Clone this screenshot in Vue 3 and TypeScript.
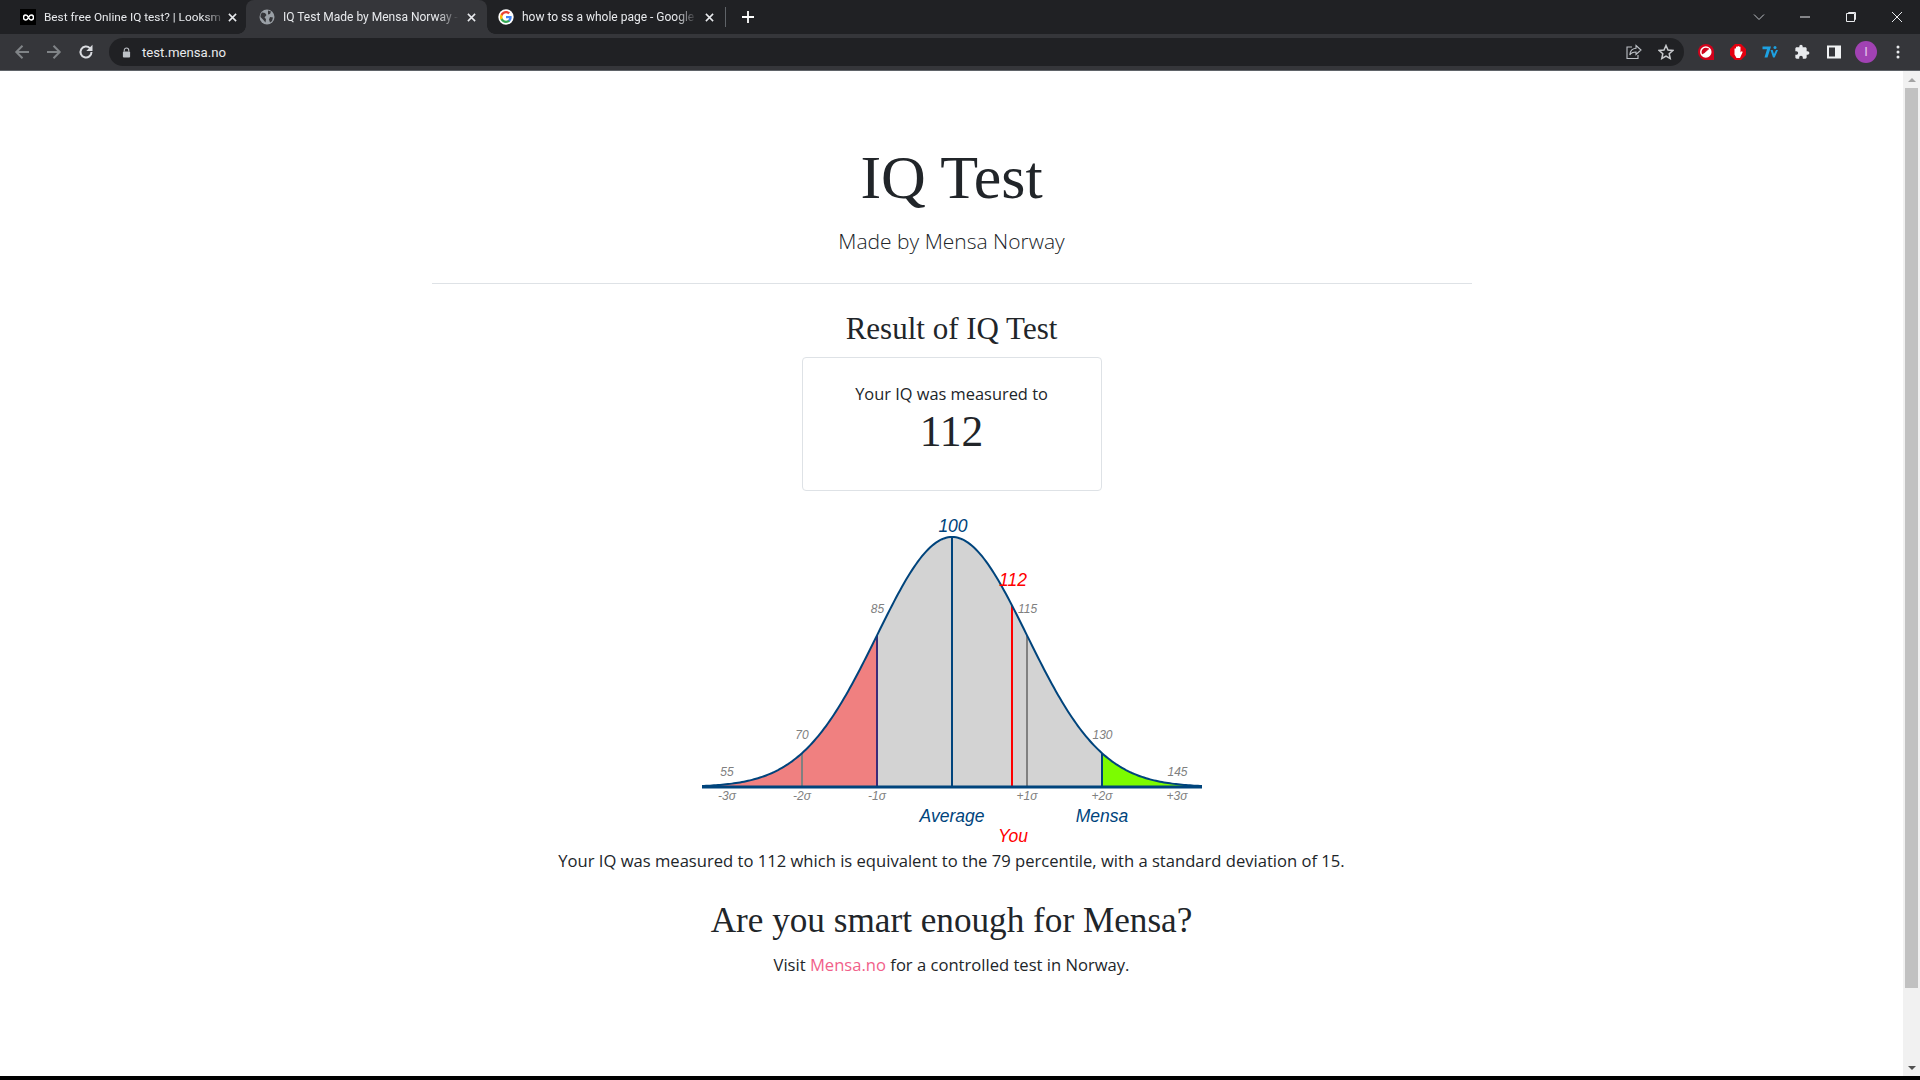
<script setup lang="ts">
const cx = 952
const base = 786
const yAt = (x: number) => base - 250 * Math.exp(-((x - cx) ** 2) / (2 * 75 * 75))
const curve = (a: number, b: number) => {
  const pts: string[] = []
  for (let x = a; x <= b; x += 2) pts.push(`${x} ${yAt(x).toFixed(2)}`)
  return pts.join(' L ')
}
const area = (a: number, b: number) => `M ${a} ${base} L ${curve(a, b)} L ${b} ${base} Z`
const line = `M ${curve(702, 1202)}`
const vlines = [
  { x: 802, c: '#808080' },
  { x: 877, c: '#3b2a78' },
  { x: 952, c: '#00447c' },
  { x: 1012, c: '#ff0000' },
  { x: 1027, c: '#808080' },
  { x: 1102, c: '#00447c' },
].map((v) => ({ ...v, y: yAt(v.x) }))
const small = [
  { t: '55', x: 727, y: 775 }, { t: '70', x: 802, y: 738 }, { t: '85', x: 877.5, y: 612 },
  { t: '115', x: 1027.5, y: 612 }, { t: '130', x: 1102.5, y: 738 }, { t: '145', x: 1177.5, y: 775 },
  { t: '-3σ', x: 727, y: 799 }, { t: '-2σ', x: 802, y: 799 }, { t: '-1σ', x: 877, y: 799 },
  { t: '+1σ', x: 1027, y: 799 }, { t: '+2σ', x: 1102, y: 799 }, { t: '+3σ', x: 1177, y: 799 },
]
const tabs = [
  { title: 'Best free Online IQ test? | Looksm', cls: 'tab t1', icon: 'inf' },
  { title: 'IQ Test Made by Mensa Norway -', cls: 'tab t2 active', icon: 'globe' },
  { title: 'how to ss a whole page - Google', cls: 'tab t3', icon: 'g' },
]
</script>

<template>
  <div class="page">
    <header class="chrome">
      <div class="tabstrip">
        <div v-for="tab in tabs" :key="tab.title" :class="tab.cls">
          <span v-if="tab.icon === 'inf'" class="fav-inf">
            <svg width="11" height="7" viewBox="0 0 12 8"><path d="M6 4C5 2 4 1.2 3 1.2A2.8 2.8 0 0 0 3 6.800C4 6.800 5 6 6 4C7 2 8 1.200 9 1.200A2.800 2.800 0 0 1 9 6.800C8 6.800 7 6 6 4Z" fill="none" stroke="#fff" stroke-width="1.800"/></svg>
          </span>
          <svg v-else-if="tab.icon === 'globe'" class="fav" viewBox="0 0 16 16">
            <circle cx="8" cy="8" r="7.500" fill="#9aa0a6"/>
            <path d="M3 3.500l3 .5 1.500 2-2 2.500 1.500 1.500-.5 3.500-2.500-3-2.500-2.500.2-2.500zM9 1.500l3 1-1 2.500-2 .5zM11 8l3 .5-1 3.500-2 1.500-1-3z" fill="#35363a"/>
          </svg>
          <svg v-else class="fav" viewBox="0 0 48 48">
            <path fill="#fff" d="M24 1a23 23 0 1 0 0 46 23 23 0 0 0 0-46z"/>
            <path fill="#4285f4" d="M41 24.500c0-1.200-.1-2.400-.3-3.500H24v6.800h9.700c-.4 2.200-1.700 4.100-3.600 5.400v4.400h5.800c3.400-3.100 5.100-7.700 5.100-12.700z"/>
            <path fill="#34a853" d="M24 42c4.800 0 8.900-1.600 11.900-4.300l-5.800-4.400c-1.600 1.100-3.700 1.700-6.100 1.700-4.700 0-8.700-3.100-10.100-7.400H7.900v4.600C10.900 38 17 42 24 42z"/>
            <path fill="#fbbc05" d="M13.900 27.600c-.8-2.200-.8-4.900 0-7.200v-4.600h-6c-2.500 5-2.500 11.400 0 16.400z"/>
            <path fill="#ea4335" d="M24 13c2.700 0 5 .9 6.900 2.700l5.100-5.100C32.900 7.700 28.800 6 24 6 17 6 10.900 10 7.900 15.800l6 4.600C15.300 16.100 19.300 13 24 13z"/>
          </svg>
          <span class="tab-title">{{ tab.title }}</span>
          <svg class="tab-x" viewBox="0 0 10 10"><path d="M1 1l8 8M9 1l-8 8" stroke="#e8eaed" stroke-width="1.700"/></svg>
        </div>
        <span class="sep"></span>
        <svg class="plus" viewBox="0 0 12 12"><path d="M6 0v12M0 6h12" stroke="#fff" stroke-width="1.800"/></svg>
        <span class="spacer"></span>
        <svg class="win chev" viewBox="0 0 12 12"><path d="M1 3.500l5 5 5-5" fill="none" stroke="#bdc1c6" stroke-width="1"/></svg>
        <svg class="win" viewBox="0 0 12 12"><path d="M1 6h10" stroke="#e8eaed" stroke-width="1"/></svg>
        <svg class="win" viewBox="0 0 12 12"><path d="M3.500 2.500V1.500h7v7h-1M1.500 2.500h8v8h-8z" fill="none" stroke="#e8eaed" stroke-width="1"/></svg>
        <svg class="win last" viewBox="0 0 12 12"><path d="M1 1l10 10M11 1L1 11" stroke="#e8eaed" stroke-width="1"/></svg>
      </div>
      <div class="toolbar">
        <svg class="nav" viewBox="0 0 16 16"><path d="M15 8H2.500M8.500 1.800L2.300 8l6.200 6.200" fill="none" stroke="#808487" stroke-width="2"/></svg>
        <svg class="nav" viewBox="0 0 16 16"><path d="M1 8h12.500M7.500 1.800L13.700 8l-6.200 6.200" fill="none" stroke="#808487" stroke-width="2"/></svg>
        <svg class="nav" viewBox="0 0 16 16"><path d="M13.500 8a5.500 5.500 0 1 1-1.600-3.900" fill="none" stroke="#dadce0" stroke-width="2"/><path d="M14.500 .8V7H8.300z" fill="#dadce0"/></svg>
        <div class="omni">
          <svg class="lock" viewBox="0 0 10 12"><path d="M2.500 5V3.500a2.500 2.500 0 0 1 5 0V5" fill="none" stroke="#bdc1c6" stroke-width="1.200"/><rect x="1" y="5" width="8" height="6.500" rx="1" fill="#bdc1c6"/></svg>
          <span class="url">test.mensa.no</span>
          <span class="spacer"></span>
          <svg class="omni-ic share" viewBox="0 0 16 16"><path d="M10 1.500l5 4.500-5 4.500V8C7 8 5 9 3.800 11 4 7.500 6 4.500 10 4.200z" fill="none" stroke="#bdc1c6" stroke-width="1.100"/><path d="M6 3H1v11.500h11V11" fill="none" stroke="#bdc1c6" stroke-width="1.100"/></svg>
          <svg class="omni-ic star" viewBox="0 0 16 16"><path d="M8 1.500l2 4.500 4.800.5-3.600 3.200 1 4.800L8 12l-4.200 2.500 1-4.800L1.200 6.500 6 6z" fill="none" stroke="#c8cacd" stroke-width="1.500"/></svg>
        </div>
        <div class="exts">
          <svg class="ext" viewBox="0 0 16 16"><path d="M8 0a8 8 0 1 0 0 16h8V8a8 8 0 0 0-8-8z" fill="#d0021b"/><circle cx="7.800" cy="8" r="5" fill="none" stroke="#fff" stroke-width="1.500"/><path d="M11 4.500L3.800 10.800A5 5 0 0 0 11.500 11.500 5 5 0 0 0 11 4.500z" fill="#fff"/><path d="M11 4.500L5.500 9.500" stroke="#d0021b" stroke-width="1"/></svg>
          <svg class="ext" viewBox="0 0 16 16"><path d="M5 0h6l5 5v6l-5 5H5l-5-5V5z" fill="#e3000f"/><path d="M4.500 8.500V5a.8.8 0 0 1 1.500-.2V3a.8.8 0 0 1 1.500 0v-.6a.8.8 0 0 1 1.500 0V3a.8.8 0 0 1 1.500.2v5.300l.8-1a.8.8 0 0 1 1.200 1L10 14H6.500L4.500 10.500z" fill="#fff"/></svg>
          <svg class="ext" viewBox="0 0 16 16"><path d="M.500 2.500h8.500L5.500 13.500H2.500L5 5.300H.500z" fill="#1da1e2"/><path d="M8.500 6h2.200L12 10l2-4h2l-3.300 7.500h-1.700z" fill="#1da1e2"/><circle cx="13" cy="3.500" r="1.500" fill="#1da1e2"/></svg>
          <svg class="ext" viewBox="0 0 24 24"><path d="M20.500 11H19V7c0-1.100-.9-2-2-2h-4V3.500C13 2.120 11.880 1 10.500 1S8 2.120 8 3.500V5H4c-1.100 0-1.990.900-1.990 2v3.800H3.500c1.490 0 2.700 1.210 2.700 2.700s-1.210 2.700-2.700 2.700H2V20c0 1.100.900 2 2 2h3.800v-1.500c0-1.490 1.210-2.700 2.700-2.700 1.490 0 2.700 1.210 2.700 2.700V22H17c1.100 0 2-.900 2-2v-4h1.500c1.380 0 2.500-1.120 2.500-2.500S21.880 11 20.500 11z" fill="#e8eaed"/></svg>
          <svg class="ext" viewBox="0 0 16 16"><rect x="1" y="1.500" width="14" height="13" fill="#f1f3f4"/><rect x="3" y="3.500" width="6" height="9" fill="#35363a"/></svg>
          <span class="avatar">I</span>
          <svg class="ext" viewBox="0 0 16 16"><circle cx="8" cy="3" r="1.500" fill="#e8eaed"/><circle cx="8" cy="8" r="1.500" fill="#e8eaed"/><circle cx="8" cy="13" r="1.500" fill="#e8eaed"/></svg>
        </div>
      </div>
    </header>

    <div class="view">
      <main class="content">
        <div class="container">
          <header class="head">
            <h1>IQ Test</h1>
            <p class="lead">Made by Mensa Norway</p>
          </header>
          <hr />
          <h3>Result of IQ Test</h3>
          <section class="card">
            <p class="card-label">Your IQ was measured to</p>
            <p class="card-value">112</p>
          </section>
          <svg class="chart" width="500" height="340" viewBox="702 510 500 340">
            <path :d="area(702, 878)" fill="#f08080" />
            <path :d="area(876, 1102)" fill="#d3d3d3" />
            <path :d="area(1102, 1202)" fill="#7cfc00" />
            <line v-for="v in vlines" :key="v.x" :x1="v.x" :x2="v.x" :y1="v.y" :y2="base" :stroke="v.c" stroke-width="2" />
            <path :d="line" fill="none" stroke="#00447c" stroke-width="2" />
            <line x1="702" x2="1202" :y1="base" :y2="base" stroke="#00447c" stroke-width="3" />
            <text v-for="s in small" :key="s.t" :x="s.x" :y="s.y" class="t-small">{{ s.t }}</text>
            <text x="953" y="531" class="t-big blue">100</text>
            <text x="1013" y="585" class="t-big red">112</text>
            <text x="952" y="821" class="t-big blue">Average</text>
            <text x="1102" y="821" class="t-big blue">Mensa</text>
            <text x="1013" y="841" class="t-big red">You</text>
          </svg>
          <p class="desc">Your IQ was measured to 112 which is equivalent to the 79 percentile, with a standard deviation of 15.</p>
          <h2>Are you smart enough for Mensa?</h2>
          <p class="desc visit">Visit <a href="#">Mensa.no</a> for a controlled test in Norway.</p>
        </div>
      </main>
      <aside class="scrollbar">
        <span class="arrow up"></span>
        <span class="thumb"></span>
        <span class="arrow down"></span>
      </aside>
    </div>
    <div class="bottom"></div>
  </div>
</template>

<style scoped>
.page { width: 1920px; height: 1080px; display: flex; flex-direction: column; overflow: hidden; background: #fff; color: #212529; font-family: "Open Sans", sans-serif; }
.chrome { flex: none; height: 71px; background: #35363a; border-bottom: 1px solid #5f6368; box-sizing: border-box; }
.tabstrip { height: 34px; background: #202124; display: flex; align-items: center; padding-left: 16px; }
.tab { height: 34px; display: flex; align-items: center; gap: 8px; box-sizing: border-box; color: #e8eaed; font: 12px/34px "Roboto", sans-serif; flex: none; }
.t1 { width: 230px; padding: 0 8px 0 4px; font-size: 11.800px; }
.t1 .tab-title { margin-right: -6px; }
.t2 { width: 241px; padding: 0 10px 0 13px; }
.t3 { width: 238px; padding: 0 10px 0 11px; }
.tab.active { background: #35363a; border-radius: 8px 8px 0 0; position: relative; }
.tab.active::before, .tab.active::after { content: ""; position: absolute; bottom: 0; width: 8px; height: 8px; }
.tab.active::before { left: -8px; background: radial-gradient(circle at 0 0, transparent 7.500px, #35363a 8px); }
.tab.active::after { right: -8px; background: radial-gradient(circle at 100% 0, transparent 7.500px, #35363a 8px); }
.tab-title { flex: 1; min-width: 0; overflow: hidden; white-space: nowrap; -webkit-mask-image: linear-gradient(90deg, #000 88%, transparent); mask-image: linear-gradient(90deg, #000 88%, transparent); }
.fav { width: 16px; height: 16px; flex: none; }
.fav-inf { width: 16px; height: 16px; background: #000; display: flex; align-items: center; justify-content: center; flex: none; }
.tab-x { width: 9px; height: 9px; flex: none; margin-right: 1px; }
.sep { width: 1px; height: 20px; background: #5f6368; flex: none; }
.plus { width: 12px; height: 12px; margin-left: 16px; flex: none; }
.spacer { flex: 1; }
.win { width: 12px; height: 12px; margin-left: 34px; flex: none; }
.chev { margin-left: 0; }
.win.last { margin-right: 17px; }
.toolbar { height: 36px; display: flex; align-items: center; padding-left: 14px; gap: 16px; }
.nav { width: 16px; height: 16px; flex: none; }
.omni { width: 1575px; height: 28px; margin-left: -1px; background: #202124; border-radius: 14px; display: flex; align-items: center; padding: 0 10px 0 13px; box-sizing: border-box; flex: none; }
.lock { width: 9px; height: 11px; flex: none; }
.url { margin-left: 11px; font: 13.200px "Roboto", sans-serif; color: #e8eaed; }
.omni-ic { width: 16px; height: 16px; flex: none; }
.star { margin-left: 16px; }
.exts { display: flex; align-items: center; gap: 16px; margin-left: -2px; }
.ext { width: 16px; height: 16px; flex: none; }
.avatar { width: 22px; height: 22px; margin: 0 -3px; border-radius: 50%; background: #a142b3; color: #e6c4ec; font: 13px/22px "Roboto", sans-serif; text-align: center; flex: none; }
.view { flex: 1; display: flex; min-height: 0; }
.content { flex: 1; min-width: 0; }
.container { width: 1040px; margin: 0 auto; text-align: center; }
.head { padding-top: 68px; height: 212px; box-sizing: border-box; }
h1 { margin: 0; font: 400 62px/76px "Liberation Serif", serif; }
.lead { margin: 10px 0 0; font-size: 21px; line-height: 32px; font-weight: 300; }
hr { margin: 0; border: 0; border-top: 1px solid #dee2e6; }
h3 { margin: 27px 0 0; font: 400 31px/36px "Liberation Serif", serif; }
.card { width: 300px; height: 134px; margin: 10px auto 0; border: 1px solid #dee2e6; border-radius: 4px; box-sizing: border-box; padding-top: 23px; }
.card p { margin: 0; }
.card-label { font-size: 16.400px; line-height: 25px; }
.card-value { font: 400 43.500px/50px "Liberation Serif", serif; }
.chart { display: block; margin: 20px auto 0; }
.t-small { font: italic 12px "Liberation Sans", sans-serif; fill: #808080; text-anchor: middle; }
.t-big { font: italic 17.500px "Liberation Sans", sans-serif; text-anchor: middle; }
.blue { fill: #00447c; }
.red { fill: #ff0000; }
.desc { margin: -2px 0 0; font-size: 16.600px; line-height: 24px; }
h2 { margin: 27px 0 0; font: 400 35.200px/42px "Liberation Serif", serif; }
.visit { margin-top: 11px; }
a { color: #f15f8a; text-decoration: none; }
.scrollbar { flex: none; width: 17px; background: #f1f1f1; display: flex; flex-direction: column; align-items: center; }
.thumb { width: 13px; height: 900px; background: #c1c1c1; margin-top: 6px; flex: none; }
.arrow { width: 0; height: 0; border-left: 4px solid transparent; border-right: 4px solid transparent; flex: none; }
.arrow.up { border-bottom: 4px solid #a3a3a3; margin-top: 7px; }
.arrow.down { border-top: 4px solid #505050; margin-top: auto; margin-bottom: 6px; }
.bottom { flex: none; height: 4px; background: #000; }
</style>
